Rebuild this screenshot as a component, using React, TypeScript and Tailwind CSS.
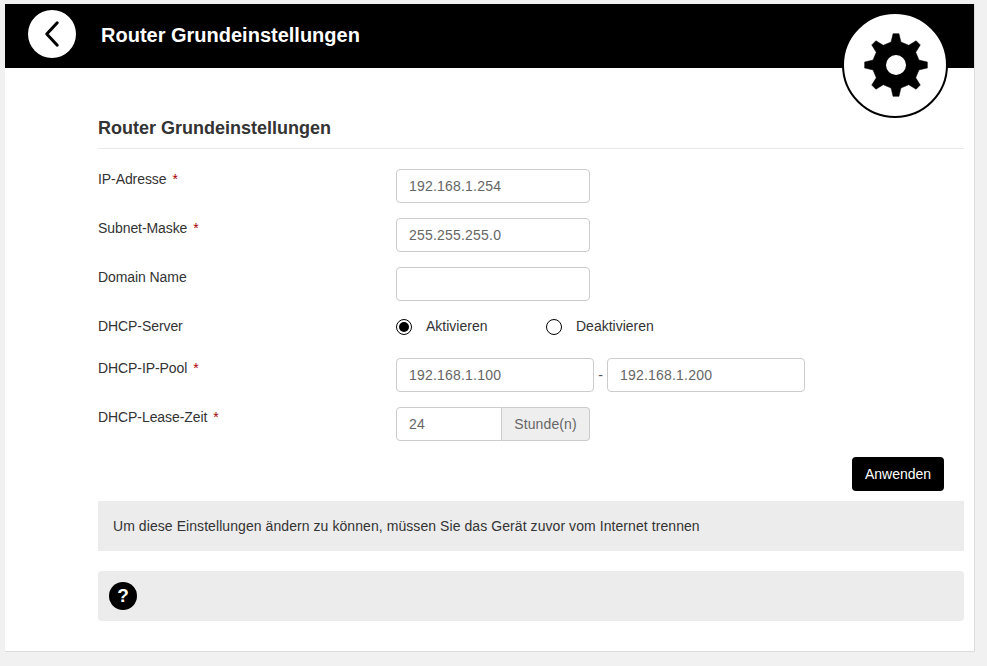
function gearPath() {
  const cx = 50
  const cy = 50
  const outer = 31.5
  const root = 23.5
  const teeth = 8
  const pts: string[] = []
  for (let i = 0; i < teeth; i++) {
    const a = (i * 2 * Math.PI) / teeth - Math.PI / 2
    const step = (2 * Math.PI) / teeth
    const list: [number, number][] = [
      [root, a - step * 0.27],
      [outer, a - step * 0.12],
      [outer, a + step * 0.12],
      [root, a + step * 0.27],
    ]
    for (const [r, t] of list) {
      pts.push(`${(cx + r * Math.cos(t)).toFixed(2)} ${(cy + r * Math.sin(t)).toFixed(2)}`)
    }
  }
  return `M${pts.join('L')}Z`
}

function GearIcon() {
  return (
    <svg viewBox="0 0 100 100" className="w-[100px] h-[100px] ml-[1px] mt-[-1px]">
      <path d={gearPath()} fill="#000" stroke="#000" strokeWidth={0.5} strokeLinejoin="round" />
      <circle cx="50" cy="50" r="10" fill="#fff" />
    </svg>
  )
}

function Field({ label, required, children }: { label: string; required?: boolean; children: React.ReactNode }) {
  return (
    <div className="flex items-start h-[34px] mb-[15px]">
      <div className="w-[298px] text-[14px] leading-5 tracking-[-0.08px] text-[#333]">
        {label}
        {required && <span className="text-[#a00] ml-[6px]">*</span>}
      </div>
      {children}
    </div>
  )
}

function TextInput({ value, width }: { value: string; width: string }) {
  return (
    <input
      readOnly
      value={value}
      className={`${width} h-[34px] px-3 border border-[#ccc] rounded-[4px] bg-white text-[14px] tracking-[0.2px] text-[#666] outline-none`}
    />
  )
}

function Radio({ label, checked }: { label: string; checked?: boolean }) {
  return (
    <div className="flex items-start">
      <span className="w-4 h-4 mt-[3px] rounded-full border border-black flex items-center justify-center bg-white">
        {checked && <span className="w-[10px] h-[10px] rounded-full bg-black" />}
      </span>
      <span className="ml-[14px] text-[14px] leading-5 text-[#333]">{label}</span>
    </div>
  )
}

export default function App() {
  const rows = [
    { label: 'IP-Adresse', value: '192.168.1.254', required: true },
    { label: 'Subnet-Maske', value: '255.255.255.0', required: true },
    { label: 'Domain Name', value: '', required: false },
  ]

  return (
    <div className="w-[987px] h-[666px] overflow-hidden bg-[#f1f1f1] pl-[5px] pt-[4px] font-['Liberation_Sans',Arial,sans-serif]">
      <div className="relative w-[970px] h-[648px] bg-white border-r border-b border-[#dcdcdc]">
        {/* Header */}
        <div className="h-[64px] bg-black flex items-center pl-[23px] pb-[4px]">
          <div className="w-[48px] h-[48px] rounded-full bg-white flex items-center justify-center">
            <svg viewBox="0 0 24 24" className="w-[36px] h-[36px] mr-[1px]" fill="none" stroke="#000" strokeWidth={2} strokeLinecap="round" strokeLinejoin="round">
              <path d="M15.5 4.5L8.5 12l7 7.5" />
            </svg>
          </div>
          <h1 className="ml-[25px] mt-[2px] text-[20px] font-bold text-white">Router Grundeinstellungen</h1>
        </div>

        {/* Gear badge */}
        <div className="absolute left-[837px] top-[8px] w-[106px] h-[106px] rounded-full bg-white border-2 border-black flex items-center justify-center">
          <GearIcon />
        </div>

        {/* Body */}
        <div className="pl-[93px] pr-[10px]">
          <h2 className="mt-[45px] h-[36px] border-b border-[#e8e8e8] text-[18px] leading-[30px] font-bold text-[#333]">
            Router Grundeinstellungen
          </h2>

          <div className="mt-[20px]">
            {rows.map((r) => (
              <Field key={r.label} label={r.label} required={r.required}>
                <TextInput value={r.value} width="w-[194px]" />
              </Field>
            ))}

            <div className="flex items-start h-[27px] mb-[15px]">
              <div className="w-[298px] text-[14px] leading-5 tracking-[-0.08px] text-[#333]">DHCP-Server</div>
              <div className="w-[150px]">
                <Radio label="Aktivieren" checked />
              </div>
              <Radio label="Deaktivieren" />
            </div>

            <Field label="DHCP-IP-Pool" required>
              <TextInput value="192.168.1.100" width="w-[198px]" />
              <span className="w-[13px] text-center text-[14px] leading-[34px] text-[#555]">-</span>
              <TextInput value="192.168.1.200" width="w-[198px]" />
            </Field>

            <Field label="DHCP-Lease-Zeit" required>
              <div className="flex w-[194px] h-[34px]">
                <input
                  readOnly
                  value="24"
                  className="w-[106px] h-[34px] px-3 border border-[#ccc] rounded-l-[4px] bg-white text-[14px] tracking-[0.2px] text-[#666] outline-none"
                />
                <span className="flex-1 flex items-center justify-center border border-l-0 border-[#ccc] rounded-r-[4px] bg-[#eee] text-[14px] tracking-[0.1px] text-[#666]">
                  Stunde(n)
                </span>
              </div>
            </Field>
          </div>

          <div className="flex justify-end pr-[20px] mt-[16px]">
            <button className="w-[92px] h-[34px] bg-black rounded-[4px] text-white text-[14px]">Anwenden</button>
          </div>

          <div className="mt-[10px] h-[50px] bg-[#ececec] flex items-center pl-[15px] text-[14px] tracking-[0.07px] text-[#333]">
            Um diese Einstellungen ändern zu können, müssen Sie das Gerät zuvor vom Internet trennen
          </div>

          <div className="mt-[20px] h-[50px] bg-[#ececec] rounded-[4px] flex items-center pl-[11px]">
            <span className="w-[28px] h-[28px] rounded-full bg-black flex items-center justify-center text-white text-[19px] font-bold">?</span>
          </div>
        </div>
      </div>
    </div>
  )
}
